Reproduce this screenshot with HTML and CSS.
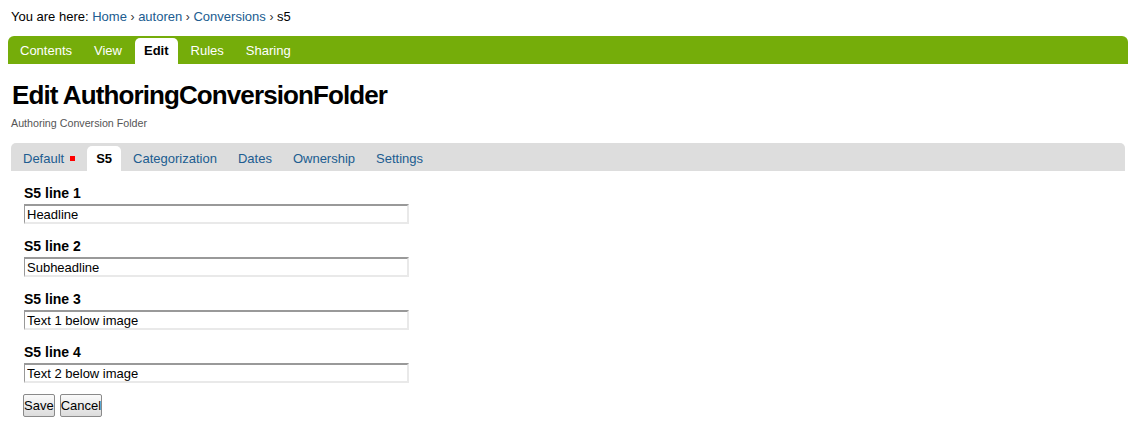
FILE: index.html
```html
<!DOCTYPE html>
<html>
<head>
<meta charset="utf-8">
<title>Edit AuthoringConversionFolder</title>
<link rel="stylesheet" href="styles.css">
</head>
<body>
<div class="page">
  <div class="breadcrumbs">You are here: <a href="#">Home</a> <span class="sep">›</span> <a href="#">autoren</a> <span class="sep">›</span> <a href="#">Conversions</a> <span class="sep">›</span> s5</div>
  <ul class="views">
    <li><a href="#">Contents</a></li>
    <li><a href="#">View</a></li>
    <li class="selected"><a href="#">Edit</a></li>
    <li><a href="#">Rules</a></li>
    <li><a href="#">Sharing</a></li>
  </ul>
  <div class="content">
    <h1 class="title">Edit AuthoringConversionFolder</h1>
    <div class="description">Authoring Conversion Folder</div>
    <ul class="formtabs">
      <li><a href="#">Default <span class="required"></span></a></li>
      <li class="selected"><a href="#">S5</a></li>
      <li><a href="#">Categorization</a></li>
      <li><a href="#">Dates</a></li>
      <li><a href="#">Ownership</a></li>
      <li><a href="#">Settings</a></li>
    </ul>
    <form class="form">
      <div class="field">
        <label>S5 line 1</label>
        <input type="text" value="Headline">
      </div>
      <div class="field">
        <label>S5 line 2</label>
        <input type="text" value="Subheadline">
      </div>
      <div class="field">
        <label>S5 line 3</label>
        <input type="text" value="Text 1 below image">
      </div>
      <div class="field">
        <label>S5 line 4</label>
        <input type="text" value="Text 2 below image">
      </div>
      <div class="buttons">
        <button type="button">Save</button>
        <button type="button">Cancel</button>
      </div>
    </form>
  </div>
</div>
</body>
</html>
```
FILE: styles.css
```css
html, body {
  margin: 0;
  padding: 0;
  background: #fff;
}
body {
  font-family: "Liberation Sans", Arial, sans-serif;
  font-size: 13px;
  color: #000;
}
a {
  color: #205c90;
  text-decoration: none;
}
.page {
  padding: 0 8px;
}
.breadcrumbs {
  padding: 9px 0 0 3px;
  line-height: 16px;
  color: #000;
}
.breadcrumbs .sep {
  font-size: 12px;
  color: #333;
}
.views {
  list-style: none;
  margin: 11px 0 0 0;
  padding: 0 0 0 3px;
  height: 28px;
  background: #75ad0a;
  border-radius: 6px 6px 0 0;
  display: flex;
  align-items: flex-end;
  gap: 4px;
}
.views li a {
  display: block;
  height: 26px;
  line-height: 26px;
  padding: 0 9px;
  color: #fff;
}
.views li.selected a {
  background: #fff;
  color: #000;
  font-weight: bold;
  border-radius: 5px 5px 0 0;
}
.content {
  padding: 0 3px;
}
.title {
  margin: 16px 0 0 0;
  font-size: 26px;
  line-height: 30px;
  font-weight: bold;
  letter-spacing: -0.9px;
  padding-left: 1px;
}
.description {
  margin-top: 6px;
  font-size: 10.7px;
  line-height: 14px;
  color: #555;
}
.formtabs {
  list-style: none;
  margin: 13px 0 0 0;
  padding: 0 0 0 3px;
  height: 28px;
  background: #dddddd;
  border-radius: 5px 5px 0 0;
  display: flex;
  align-items: flex-end;
  gap: 3px;
}
.formtabs li a {
  display: flex;
  align-items: center;
  height: 25px;
  line-height: 25px;
  padding: 0 9px;
  color: #205c90;
}
.formtabs li.selected a {
  background: #fff;
  color: #000;
  font-weight: bold;
  border-radius: 5px 5px 0 0;
}
.required {
  display: inline-block;
  width: 5px;
  height: 5px;
  background: #ff0000;
  margin-left: 6px;
}
.form {
  padding: 14px 0 0 13px;
  margin: 0;
}
.field {
  margin-bottom: 14px;
}
.field label {
  display: block;
  font-weight: bold;
  font-size: 14px;
  line-height: 16px;
}
.field input {
  display: block;
  box-sizing: border-box;
  margin-top: 3px;
  width: 385px;
  height: 20px;
  padding: 0 2px;
  font-family: "Liberation Sans", Arial, sans-serif;
  font-size: 13px;
  color: #000;
  background: #fff;
  border-style: solid;
  border-width: 2px 2px 2px 1px;
  border-color: #999 #e9e9e9 #e9e9e9 #999;
  outline: none;
}
.buttons {
  display: flex;
  gap: 5px;
  margin-top: -3px;
  margin-left: -1px;
}
.buttons button {
  height: 23px;
  padding: 0;
  font-family: "Liberation Sans", Arial, sans-serif;
  font-size: 13px;
  color: #000;
  background: linear-gradient(#fafafa, #dcdcdc);
  border: 1px solid #8a8a8a;
  border-radius: 2px;
}
```
